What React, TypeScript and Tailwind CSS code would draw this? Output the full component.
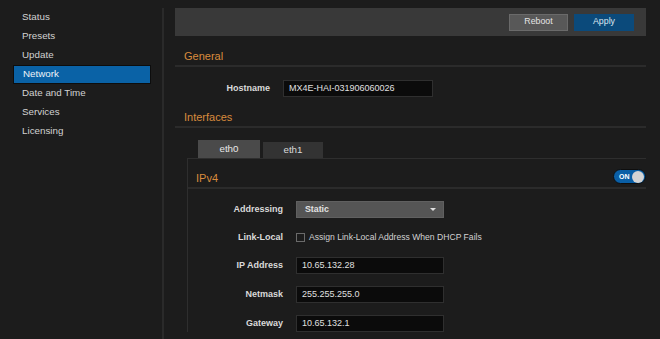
import React from 'react';

const menu = ['Status', 'Presets', 'Update', 'Network', 'Date and Time', 'Services', 'Licensing'];

const Field: React.FC<{ label: string; children: React.ReactNode; h?: string }> = ({ label, children, h = 'h-[17px]' }) => (
  <div className={`flex items-center ${h}`}>
    <div className="w-[95px] text-right text-[9px] font-bold text-[#dadada]">{label}</div>
    <div className="ml-[13px] flex items-center">{children}</div>
  </div>
);

const TextBox: React.FC<{ value: string; w: string }> = ({ value, w }) => (
  <div className={`${w} h-[17px] bg-[#0b0b0b] border border-[#2f2f2f] flex items-center pl-[5px] text-[9px] text-[#e0e0e0]`}>
    {value}
  </div>
);

const Heading: React.FC<{ title: string; h: string }> = ({ title, h }) => (
  <div className={`${h} flex items-end pl-[9px] pb-[3px] border-b-2 border-[#2b2b2b]`}>
    <span className="text-[11px] leading-none text-[#d98b3c]">{title}</span>
  </div>
);

export default function App() {
  return (
    <div
      className="flex h-[339px] w-[660px] overflow-hidden bg-[#1c1c1c] text-[#d0d0d0]"
      style={{ fontFamily: '"Liberation Sans", Arial, sans-serif' }}
    >
      {/* Sidebar */}
      <div className="w-[162px] shrink-0 pt-[8px] flex flex-col">
        {menu.map((m) => (
          <div
            key={m}
            className={`ml-[13px] mr-[11px] h-[19px] pl-[9px] flex items-center text-[9.8px] ${
              m === 'Network' ? 'bg-[#0a62a6] text-[#eef3f8] border border-[#0d0d0d]' : 'text-[#d2d2d2]'
            }`}
          >
            {m}
          </div>
        ))}
      </div>
      <div className="w-[2px] mt-[8px] bg-[#2a2a2a] shrink-0" />

      {/* Main */}
      <div className="flex-1 pl-[11px] pr-[14px] pt-[8px]">
        <div className="h-[28px] bg-[#393939] flex items-center justify-end pr-[12px] gap-[6px]">
          <button className="w-[59px] h-[17px] bg-[#585858] border border-[#6a6a6a] text-[8.8px] text-[#e4e4e4]">Reboot</button>
          <button className="w-[60px] h-[17px] bg-[#0b4a7b] text-[8.8px] text-[#dde6ef]">Apply</button>
        </div>

        <Heading title="General" h="h-[31px]" />
        <div className="pt-[13px]">
          <Field label="Hostname">
            <TextBox value="MX4E-HAI-031906060026" w="w-[150px]" />
          </Field>
        </div>

        <Heading title="Interfaces" h="h-[31px]" />

        <div className="pl-[23px] pt-[12px] flex items-end gap-[3px]">
          <div className="w-[62px] h-[18px] bg-[#4a4a4a] flex items-center justify-center text-[9.8px] text-[#e8e8e8]">eth0</div>
          <div className="w-[60px] h-[16px] bg-[#333333] flex items-center justify-center text-[9.8px] text-[#dadada]">eth1</div>
        </div>

        <div className="ml-[12px] border-t border-l border-[#2e2e2e]">
          <div className="h-[30px] flex items-end justify-between pl-[8px] pb-[3px] border-b-2 border-[#2b2b2b]">
            <span className="text-[11px] leading-none text-[#d98b3c]">IPv4</span>
            <div className="w-[33px] h-[15px] rounded-full bg-[#0a5fa6] border border-[#0e0e0e] flex items-center justify-between pl-[5px] pr-[1px]">
              <span className="text-[7px] font-bold text-white leading-none">ON</span>
              <span className="w-[12px] h-[12px] rounded-full bg-[#d4d4d4]" />
            </div>
          </div>

          <div className="pt-[12px] flex flex-col gap-[12px]">
            <Field label="Addressing">
              <div className="w-[148px] h-[17px] bg-[#555555] border border-[#606060] flex items-center justify-between pl-[8px] pr-[7px] text-[8.8px] font-bold text-[#e2e2e2]">
                <span>Static</span>
                <span className="w-0 h-0 border-l-[3px] border-r-[3px] border-t-[3px] border-l-transparent border-r-transparent border-t-[#e0e0e0]" />
              </div>
            </Field>
            <Field label="Link-Local" h="h-[15px]">
              <div className="flex items-center">
                <span className="w-[9px] h-[9px] border border-[#6a6a6a] bg-[#1c1c1c]" />
                <span className="ml-[4px] text-[8.6px] text-[#d2d2d2] whitespace-nowrap">Assign Link-Local Address When DHCP Fails</span>
              </div>
            </Field>
            <Field label="IP Address">
              <TextBox value="10.65.132.28" w="w-[148px]" />
            </Field>
            <Field label="Netmask">
              <TextBox value="255.255.255.0" w="w-[148px]" />
            </Field>
            <Field label="Gateway">
              <TextBox value="10.65.132.1" w="w-[148px]" />
            </Field>
          </div>
        </div>
      </div>
    </div>
  );
}
